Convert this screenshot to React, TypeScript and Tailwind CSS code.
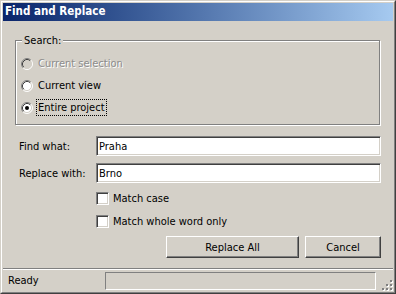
import React from 'react';

const sunken =
  'border border-t-[#808080] border-l-[#808080] border-r-white border-b-white shadow-[inset_1px_1px_0_#404040,inset_-1px_-1px_0_#d4d0c8]';

const raised =
  'border border-t-white border-l-white border-r-[#404040] border-b-[#404040] shadow-[inset_-1px_-1px_0_#808080,inset_1px_1px_0_#d4d0c8]';

const Radio = ({ checked, disabled }: { checked?: boolean; disabled?: boolean }) => (
  <svg width="12" height="12" viewBox="0 0 12 12" className="shrink-0">
    <circle cx="6" cy="6" r="5" fill={disabled ? '#d4d0c8' : '#fff'} />
    <path d="M2.11 9.89A5.5 5.5 0 0 1 9.89 2.11" stroke="#808080" fill="none" />
    <path d="M9.89 2.11A5.5 5.5 0 0 1 2.11 9.89" stroke="#fff" fill="none" />
    <path d="M2.82 9.18A4.5 4.5 0 0 1 9.18 2.82" stroke="#404040" fill="none" />
    <path d="M9.18 2.82A4.5 4.5 0 0 1 2.82 9.18" stroke="#d4d0c8" fill="none" />
    {checked && <circle cx="6" cy="6" r="2" fill="#000" />}
  </svg>
);

const Grip = () => (
  <svg width="12" height="12" viewBox="0 0 12 12">
    {[
      [9, 1],
      [9, 5],
      [5, 5],
      [9, 9],
      [5, 9],
      [1, 9],
    ].map(([x, y]) => (
      <g key={`${x}-${y}`}>
        <rect x={x + 1} y={y + 1} width="2" height="2" fill="#fff" />
        <rect x={x} y={y} width="2" height="2" fill="#808080" />
      </g>
    ))}
  </svg>
);

const Field = ({ label, value }: { label: string; value: string }) => (
  <div className="flex items-center pl-[16px] h-[20px]">
    <label className="w-[77px]">{label}</label>
    <div className={`w-[285px] h-[20px] bg-white flex items-center pl-[2px] ${sunken}`}>{value}</div>
  </div>
);

const Check = ({ label }: { label: string }) => (
  <div className="flex items-center pl-[93px] h-[13px] gap-[4px]">
    <span className={`w-[13px] h-[13px] bg-white ${sunken}`} />
    <span>{label}</span>
  </div>
);

const FindReplace = () => {
  return (
    <div className="w-[396px] h-[294px] bg-[#d4d0c8] border border-t-[#d4d0c8] border-l-[#d4d0c8] border-r-[#404040] border-b-[#404040] font-['DejaVu_Sans_Condensed','Liberation_Sans',sans-serif] text-[11px] text-black leading-none">
      <div className="h-full border border-t-white border-l-white border-r-[#808080] border-b-[#808080] p-[1px] flex flex-col">
        {/* title bar */}
        <div className="h-[18px] bg-linear-to-r from-[#0a246a] to-[#a6caf0] flex items-center pl-[2px] text-white font-bold text-[11.5px]">
          Find and Replace
        </div>

        {/* search group */}
        <div className="relative mt-[19px] ml-[12px] w-[365px] h-[85px] border border-[#808080] shadow-[inset_1px_1px_0_#fff,1px_1px_0_#fff]">
          <span className="absolute -top-[6px] left-[6px] px-[2px] bg-[#d4d0c8]">Search:</span>
          <div className="flex flex-col gap-[5px] pt-[14px] pl-[5px]">
            <div className="flex items-center h-[17px] gap-[3px]">
              <Radio disabled />
              <span className="px-[2px] text-[#8c8c8c] [text-shadow:1px_1px_0_#fff]">Current selection</span>
            </div>
            <div className="flex items-center h-[17px] gap-[3px]">
              <Radio />
              <span className="px-[2px]">Current view</span>
            </div>
            <div className="flex items-center h-[17px] gap-[3px]">
              <Radio checked />
              <span className="px-[1px] h-[17px] flex items-center border border-dotted border-black">Entire project</span>
            </div>
          </div>
        </div>

        <div className="mt-[11px] flex flex-col">
          <Field label="Find what:" value="Praha" />
          <div className="mt-[7px]">
            <Field label="Replace with:" value="Brno" />
          </div>
          <div className="mt-[9px]">
            <Check label="Match case" />
          </div>
          <div className="mt-[10px]">
            <Check label="Match whole word only" />
          </div>
          <div className="mt-[8px] flex justify-end gap-[6px] pr-[12px]">
            <button className={`w-[133px] h-[22px] bg-[#d4d0c8] ${raised}`}>Replace All</button>
            <button className={`w-[76px] h-[22px] bg-[#d4d0c8] ${raised}`}>Cancel</button>
          </div>
        </div>

        {/* status bar */}
        <div className="mt-[10px] flex-1 border-t border-[#808080] shadow-[inset_0_1px_0_#fff] flex items-center pl-[5px] pt-[1px] relative">
          <span className="w-[97px]">Ready</span>
          <div className="w-[271px] h-[18px] border border-t-[#808080] border-l-[#808080] border-r-white border-b-white" />
          <div className="absolute right-0 bottom-0">
            <Grip />
          </div>
        </div>
      </div>
    </div>
  );
};

export default function App() {
  return <FindReplace />;
}
